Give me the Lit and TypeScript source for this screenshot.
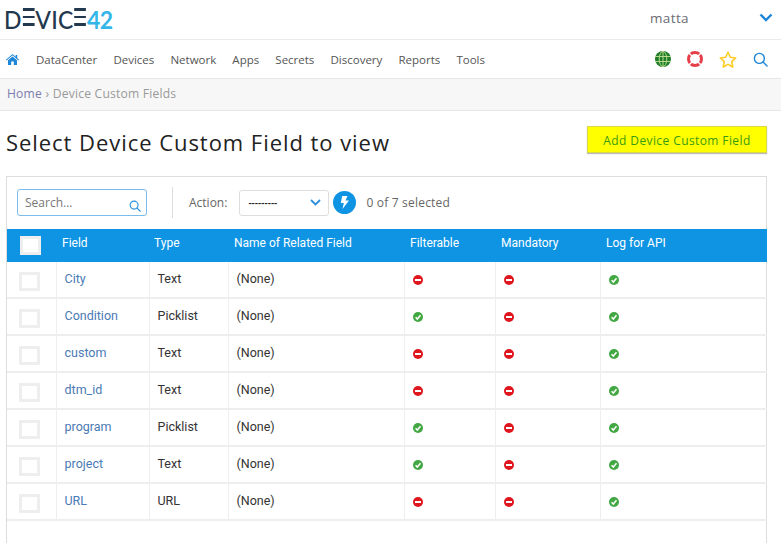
import { LitElement, html, css } from "lit";
import { customElement } from "lit/decorators.js";

const rows = [
  ["City", "Text", false, false, true],
  ["Condition", "Picklist", true, false, true],
  ["custom", "Text", false, false, true],
  ["dtm_id", "Text", false, false, true],
  ["program", "Picklist", true, false, true],
  ["project", "Text", true, false, true],
  ["URL", "URL", false, false, true],
] as const;

const navItems = ["DataCenter", "Devices", "Network", "Apps", "Secrets", "Discovery", "Reports", "Tools"];

const searchIcon = (size: number, color: string) => html`<svg width=${size} height=${size} viewBox="0 0 16 16" fill="none" stroke=${color} stroke-width="1.5" stroke-linecap="round"><circle cx="6.8" cy="6.8" r="5.3"></circle><path d="M10.7 10.7 15 15"></path></svg>`;

const statusIcon = (ok: boolean) =>
  ok
    ? html`<svg class="status" width="10" height="10" viewBox="0 0 10 10"><circle cx="5" cy="5" r="5" fill="#43a843"></circle><path d="M2.600 5.200 4.300 7 7.500 3.200" fill="none" stroke="#fff" stroke-width="1.500"></path></svg>`
    : html`<svg class="status" width="10" height="10" viewBox="0 0 10 10"><circle cx="5" cy="5" r="5" fill="#e0161e"></circle><rect x="2" y="4" width="6" height="2" fill="#fff"></rect></svg>`;

@customElement("app-root")
export class AppRoot extends LitElement {
  static styles = css`
    :host {
      display: flex;
      flex-direction: column;
      height: 543px;
      overflow: hidden;
      background: #fff;
      font-family: "Open Sans", sans-serif;
      color: #555;
    }
    .top {
      flex: none;
      display: flex;
      align-items: center;
      justify-content: space-between;
      border-bottom: 1px solid #eaeaea;
      padding: 0 8px 4px 4px;
      height: 35px;
    }
    .logo {
      font-family: "Lato", sans-serif;
      font-size: 25.5px;
      line-height: 26px;
      font-weight: 500;
      letter-spacing: 0.3px;
      color: #22384f;
      white-space: nowrap;
      margin-top: 2px;
      transform: scaleX(0.9);
      transform-origin: left center;
    }
    .logo .bar-e {
      position: relative;
      color: transparent;
    }
    .logo .bar-e::before {
      content: "";
      position: absolute;
      left: 1px;
      right: 1px;
      top: 4px;
      height: 18px;
      background: linear-gradient(#22384f 0 3px, transparent 3px 8px, #22384f 8px 10.500px, transparent 10.500px 15px, #22384f 15px 18px);
    }
    .logo .num {
      color: #35b6e9;
      font-weight: 700;
      letter-spacing: -0.8px;
    }
    .user {
      display: flex;
      align-items: center;
      gap: 70px;
      font-size: 13.5px;
      letter-spacing: 0.4px;
      color: #6b6b73;
    }
    .nav {
      flex: none;
      height: 38px;
      display: flex;
      align-items: center;
      padding: 0 13px 0 6px;
      border-bottom: 1px solid #e6e6e6;
    }
    .nav .home {
      display: flex;
      margin-right: 17px;
    }
    .nav .links {
      display: flex;
      gap: 16.150px;
      font-size: 11.5px;
      color: #555;
    }
    .nav .icons {
      margin-left: auto;
      display: flex;
      align-items: center;
      gap: 16px;
    }
    .crumbs {
      flex: none;
      height: 32px;
      display: flex;
      align-items: center;
      padding: 0 0 2px 7px;
      box-sizing: border-box;
      gap: 3.500px;
      background: #f7f7f7;
      border-bottom: 1px solid #e6e6e6;
      font-size: 12.100px;
      letter-spacing: 0.2px;
      color: #999;
    }
    .crumbs a {
      color: #7c7cae;
    }
    .head {
      flex: none;
      height: 65px;
      display: flex;
      align-items: flex-start;
      justify-content: space-between;
      padding: 15px 14px 0 6px;
      box-sizing: border-box;
    }
    h1 {
      margin: 1px 0 0;
      font-size: 22px;
      line-height: 30px;
      font-weight: 400;
      letter-spacing: 0.95px;
      color: #222;
    }
    .add {
      width: 180px;
      height: 27px;
      box-sizing: border-box;
      background: #ffff00;
      border: 1px solid #d8d84a;
      box-shadow: 0 1px 1px #bbb;
      color: #3a9a12;
      font: 12px "Open Sans", sans-serif;
      letter-spacing: 0.4px;
      padding: 2px 0 0;
    }
    .card {
      flex: 1;
      margin: 0 14px 0 6px;
      border: 1px solid #ddd;
      border-bottom: none;
    }
    .toolbar {
      height: 52px;
      box-sizing: border-box;
      display: flex;
      align-items: center;
      padding: 0 0 1px 10px;
      font-size: 12px;
      color: #666;
    }
    .toolbar .text {
      margin-bottom: 1px;
    }
    .search {
      width: 130px;
      height: 27px;
      box-sizing: border-box;
      border: 1px solid #7cbcec;
      border-radius: 3px;
      display: flex;
      align-items: center;
      justify-content: space-between;
      padding: 0 5px 0 7px;
      color: #777;
      font-size: 12px;
    }
    .search svg {
      margin-top: 7px;
    }
    .sep {
      width: 1px;
      height: 31px;
      background: #ddd;
      margin: 0 16px 0 25px;
    }
    .select {
      width: 90px;
      height: 26px;
      margin-left: 12px;
      box-sizing: border-box;
      border: 1px solid #ddd;
      border-radius: 3px;
      display: flex;
      align-items: center;
      justify-content: space-between;
      padding: 0 7px 0 8px;
      color: #222;
      font-size: 10px;
      font-weight: 600;
    }
    .bolt {
      width: 23px;
      height: 23px;
      margin-left: 4px;
      border-radius: 50%;
      background: #0e94e3;
      display: flex;
      align-items: center;
      justify-content: center;
    }
    .count {
      margin-left: 10px;
      letter-spacing: 0.2px;
    }
    table {
      width: 760px;
      table-layout: fixed;
      border-collapse: collapse;
      font-family: "Roboto", sans-serif;
      font-size: 12.500px;
    }
    th {
      height: 33px;
      padding: 0 0 5px 5px;
      box-sizing: border-box;
      background: #0e94e3;
      color: #fff;
      font-weight: 400;
      font-size: 12px;
      text-align: left;
    }
    th + th {
      padding-left: 6px;
    }
    th:nth-child(3) {
      padding-left: 5px;
    }
    td {
      height: 37px;
      padding: 0 0 3px 8px;
      box-sizing: border-box;
      border: 1px solid #eee;
      border-width: 0 1px 2px 0;
      color: #333;
    }
    tbody tr:first-child td {
      height: 36px;
      padding-bottom: 2px;
    }
    td:last-child {
      border-right: none;
    }
    td.name {
      color: #4a7ab5;
    }
    td .status {
      display: block;
      margin: 3px 0 0;
    }
    .box {
      display: block;
      width: 21px;
      height: 19px;
      box-sizing: border-box;
      background: #fff;
      border: 3px solid #eee;
      margin-top: 6px;
      margin-left: 4px;
    }
    th .box {
      margin: 0 0 0 8px;
      position: relative;
      top: 2px;
    }
  `;

  render() {
    return html`
      <div class="top">
        <div class="logo" aria-label="DEVICE42">D<span class="bar-e">E</span>VIC<span class="bar-e">E</span><span class="num">42</span></div>
        <div class="user">
          <span>matta</span>
          <svg width="14" height="9" viewBox="0 0 14 9" fill="none" stroke="#1b86d8" stroke-width="2.400"><path d="M1.500 1.500 7 7l5.500-5.500"></path></svg>
        </div>
      </div>
      <div class="nav">
        <span class="home">
          <svg width="13" height="11" viewBox="0 0 13 11" fill="#1e86d6"><path d="M6.500 0 9.600 2.700V1h1.600v3.100L13 5.700l-.6.700-5.900-5.100L.6 6.400 0 5.700z"></path><path d="M6.500 2.400 11 6.300V11H7.800V7.600H5.200V11H2V6.300z"></path></svg>
        </span>
        <div class="links">${navItems.map((n) => html`<span>${n}</span>`)}</div>
        <div class="icons">
          <svg width="16" height="16" viewBox="0 0 16 16">
            <circle cx="8" cy="8" r="8" fill="#1e7d2a"></circle>
            <path d="M0 5.500h16M0 10.500h16M8 0v16" stroke="#b9d98a" stroke-width="1"></path>
            <ellipse cx="8" cy="8" rx="3.800" ry="7.600" fill="none" stroke="#b9d98a"></ellipse>
          </svg>
          <svg width="16" height="16" viewBox="0 0 16 16" fill="none">
            <circle cx="8" cy="8" r="6.500" stroke="#e5404a" stroke-width="3"></circle>
            <path d="M2.200 2.200l3 3M13.800 2.200l-3 3M2.200 13.800l3-3M13.800 13.800l-3-3" stroke="#fff" stroke-width="1.300"></path>
          </svg>
          <svg width="18" height="17" viewBox="0 0 18 17" fill="#fff" stroke="#ffc91f" stroke-width="1.500" stroke-linejoin="round"><path d="M9 1.300l2.300 5 5.400.6-4 3.700 1.100 5.400L9 13.300 4.200 16l1.100-5.400-4-3.700 5.400-.6z"></path></svg>
          ${searchIcon(15, "#1e86d6")}
        </div>
      </div>
      <div class="crumbs"><a>Home</a><span>›</span><span>Device Custom Fields</span></div>
      <div class="head">
        <h1>Select Device Custom Field to view</h1>
        <button class="add">Add Device Custom Field</button>
      </div>
      <div class="card">
        <div class="toolbar">
          <div class="search"><span>Search...</span>${searchIcon(12, "#2b8fdc")}</div>
          <div class="sep"></div>
          <span class="text">Action:</span>
          <div class="select">
            <span>---------</span>
            <svg width="11" height="7" viewBox="0 0 11 7" fill="none" stroke="#2b8fdc" stroke-width="1.800"><path d="M1 1l4.500 4.500L10 1"></path></svg>
          </div>
          <div class="bolt">
            <svg width="9" height="13" viewBox="0 0 9 13" fill="#fff"><path d="M2.200 0H7.500L5.500 4.500H9L2.500 13 3.800 7H.8z"></path></svg>
          </div>
          <span class="count text">0 of 7 selected</span>
        </div>
        <table>
          <colgroup>
            <col style="width:49px" /><col style="width:93px" /><col style="width:79px" /><col style="width:176px" /><col style="width:91px" /><col style="width:105px" /><col />
          </colgroup>
          <thead>
            <tr>
              <th><span class="box"></span></th>
              <th>Field</th>
              <th>Type</th>
              <th>Name of Related Field</th>
              <th>Filterable</th>
              <th>Mandatory</th>
              <th>Log for API</th>
            </tr>
          </thead>
          <tbody>
            ${rows.map(
              (r) => html`<tr>
                <td><span class="box"></span></td>
                <td class="name">${r[0]}</td>
                <td>${r[1]}</td>
                <td>(None)</td>
                <td>${statusIcon(r[2])}</td>
                <td>${statusIcon(r[3])}</td>
                <td>${statusIcon(r[4])}</td>
              </tr>`,
            )}
          </tbody>
        </table>
      </div>
    `;
  }
}
